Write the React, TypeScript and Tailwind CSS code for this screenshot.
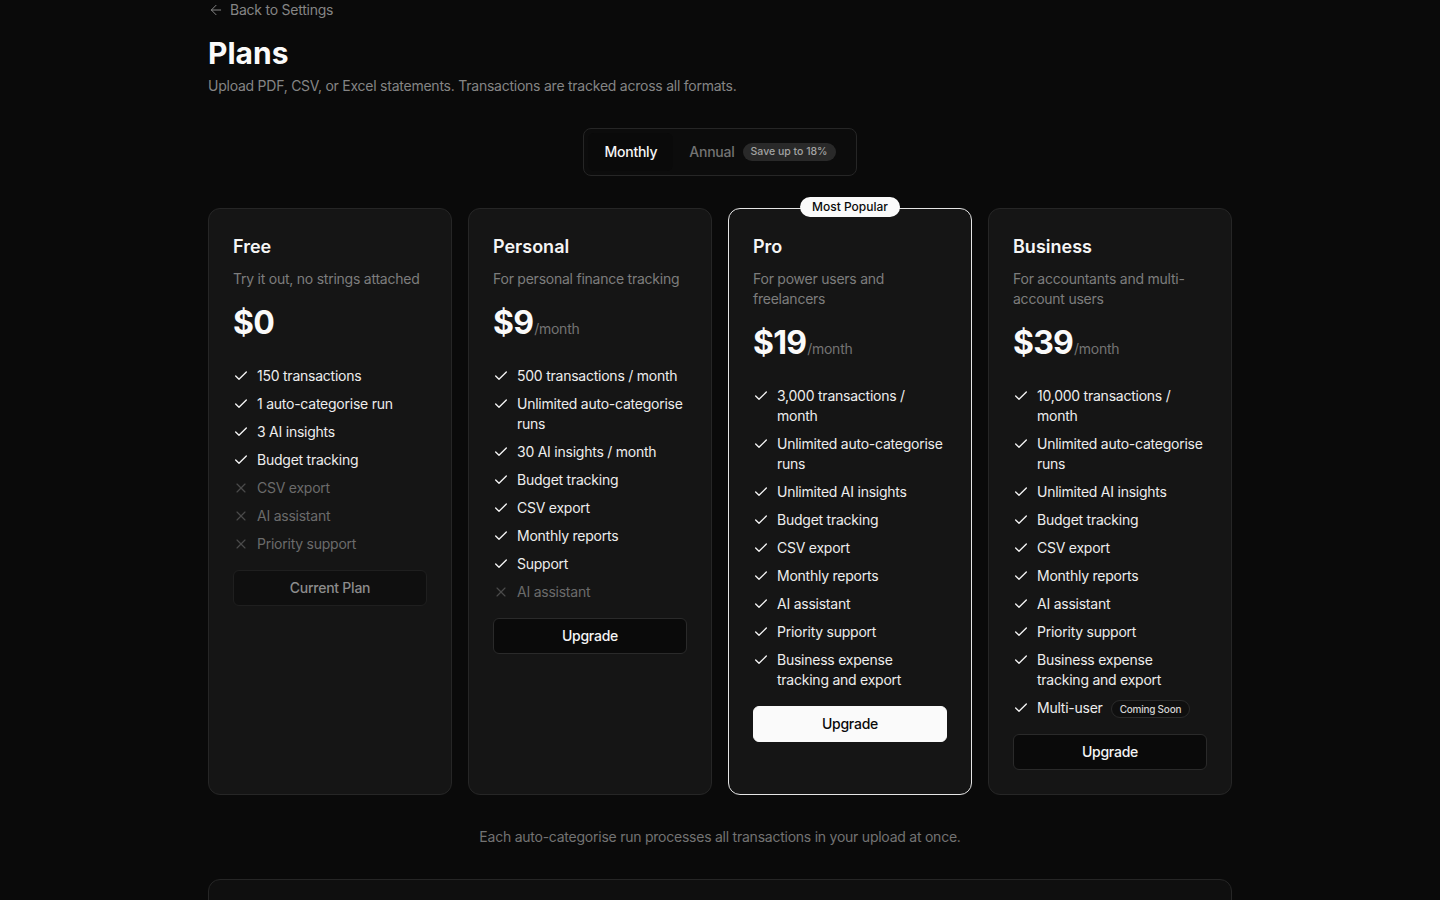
import { ArrowLeft, Check, X } from "lucide-react";

type Feature = {
  label: string;
  included: boolean;
  badge?: string;
};

type Plan = {
  name: string;
  description: string;
  price: string;
  perMonth: boolean;
  features: Feature[];
  cta: string;
  variant: "current" | "default" | "primary";
  popular?: boolean;
};

const PLANS: Plan[] = [
  {
    name: "Free",
    description: "Try it out, no strings attached",
    price: "$0",
    perMonth: false,
    cta: "Current Plan",
    variant: "current",
    features: [
      { label: "150 transactions", included: true },
      { label: "1 auto-categorise run", included: true },
      { label: "3 AI insights", included: true },
      { label: "Budget tracking", included: true },
      { label: "CSV export", included: false },
      { label: "AI assistant", included: false },
      { label: "Priority support", included: false },
    ],
  },
  {
    name: "Personal",
    description: "For personal finance tracking",
    price: "$9",
    perMonth: true,
    cta: "Upgrade",
    variant: "default",
    features: [
      { label: "500 transactions / month", included: true },
      { label: "Unlimited auto-categorise runs", included: true },
      { label: "30 AI insights / month", included: true },
      { label: "Budget tracking", included: true },
      { label: "CSV export", included: true },
      { label: "Monthly reports", included: true },
      { label: "Support", included: true },
      { label: "AI assistant", included: false },
    ],
  },
  {
    name: "Pro",
    description: "For power users and freelancers",
    price: "$19",
    perMonth: true,
    cta: "Upgrade",
    variant: "primary",
    popular: true,
    features: [
      { label: "3,000 transactions / month", included: true },
      { label: "Unlimited auto-categorise runs", included: true },
      { label: "Unlimited AI insights", included: true },
      { label: "Budget tracking", included: true },
      { label: "CSV export", included: true },
      { label: "Monthly reports", included: true },
      { label: "AI assistant", included: true },
      { label: "Priority support", included: true },
      { label: "Business expense tracking and export", included: true },
    ],
  },
  {
    name: "Business",
    description: "For accountants and multi-account users",
    price: "$39",
    perMonth: true,
    cta: "Upgrade",
    variant: "default",
    features: [
      { label: "10,000 transactions / month", included: true },
      { label: "Unlimited auto-categorise runs", included: true },
      { label: "Unlimited AI insights", included: true },
      { label: "Budget tracking", included: true },
      { label: "CSV export", included: true },
      { label: "Monthly reports", included: true },
      { label: "AI assistant", included: true },
      { label: "Priority support", included: true },
      { label: "Business expense tracking and export", included: true },
      { label: "Multi-user", included: true, badge: "Coming Soon" },
    ],
  },
];

function PlanCard({ plan }: { plan: Plan }) {
  const buttonClass =
    plan.variant === "primary"
      ? "bg-[#fafafa] text-[#0a0a0a] border-[#fafafa]"
      : plan.variant === "current"
        ? "bg-[#0f0f0f] text-[#8c8c8c] border-[#1f1f1f]"
        : "bg-[#0a0a0a] text-[#f5f5f5] border-[#2a2a2a]";

  return (
    <div
      className={`relative flex flex-col rounded-xl border bg-[#151515] p-6 ${
        plan.popular ? "border-[#e5e5e5]" : "border-[#262626]"
      }`}
    >
      {plan.popular ? (
        <span className="absolute -top-[12px] left-1/2 -translate-x-1/2 rounded-full bg-[#fafafa] px-3 py-[2px] text-xs font-medium leading-4 tracking-normal text-[#0a0a0a]">
          Most Popular
        </span>
      ) : null}

      <h3 className="text-lg font-semibold leading-7 tracking-normal text-[#f5f5f5]">
        {plan.name}
      </h3>
      <p className="mt-2 text-sm leading-5 text-[#7d7d7d]">{plan.description}</p>

      <div className="mt-[14px] flex items-baseline">
        <span className="text-[32px] font-bold leading-10 tracking-tight text-[#fafafa]">
          {plan.price}
        </span>
        {plan.perMonth ? (
          <span className="ml-px text-sm text-[#737373]">/month</span>
        ) : null}
      </div>

      <ul className="mt-[23px] flex flex-col gap-2">
        {plan.features.map((feature) => (
          <li key={feature.label} className="flex items-start gap-2 text-sm leading-5">
            {feature.included ? (
              <Check className="mt-0.5 h-4 w-4 shrink-0 text-[#f5f5f5]" strokeWidth={2} />
            ) : (
              <X className="mt-0.5 h-4 w-4 shrink-0 text-[#4a4a4a]" strokeWidth={1.75} />
            )}
            <span className={feature.included ? "text-[#ededed]" : "text-[#6b6b6b]"}>
              {feature.label}
              {feature.badge ? (
                <span className="ml-2 inline-flex items-center rounded-full border border-[#2a2a2a] bg-[#0f0f0f] px-2 py-[1px] align-middle text-[10px] font-medium leading-[14px] text-[#d4d4d4]">
                  {feature.badge}
                </span>
              ) : null}
            </span>
          </li>
        ))}
      </ul>

      <button
        type="button"
        className={`mt-4 h-9 w-full rounded-md border text-sm font-medium ${buttonClass}`}
      >
        {plan.cta}
      </button>
    </div>
  );
}

export default function App() {
  return (
    <div
      className="min-h-screen bg-[#0a0a0a] tracking-[-0.015em] text-[#f5f5f5]"
      style={{ fontFamily: "Inter, 'Noto Sans', sans-serif" }}
    >
      <div className="mx-auto max-w-5xl pb-16">
        <a href="#" className="flex h-5 items-center gap-1.5 text-sm text-[#858585]">
          <ArrowLeft className="h-4 w-4" strokeWidth={1.5} />
          Back to Settings
        </a>

        <h1 className="mt-[15px] text-3xl font-bold leading-9 tracking-normal text-[#fafafa]">
          Plans
        </h1>
        <p className="mt-[5px] text-sm leading-5 text-[#858585]">
          Upload PDF, CSV, or Excel statements. Transactions are tracked across all formats.
        </p>

        <div className="mt-8 flex justify-center">
          <div className="flex items-center rounded-lg border border-[#262626] bg-[#0c0c0c] p-1">
            <button
              type="button"
              className="h-[38px] rounded-md bg-[#0a0a0a] px-4 text-sm font-medium text-[#f5f5f5]"
            >
              Monthly
            </button>
            <button
              type="button"
              className="flex h-[38px] items-center px-4 text-sm font-medium text-[#737373]"
            >
              Annual
              <span className="ml-2 rounded-full bg-[#292929] px-2 py-[2px] text-[10.5px] leading-[14px] tracking-normal text-[#a3a3a3]">
                Save up to 18%
              </span>
            </button>
          </div>
        </div>

        <div className="mt-8 grid grid-cols-4 gap-4">
          {PLANS.map((plan) => (
            <PlanCard key={plan.name} plan={plan} />
          ))}
        </div>

        <p className="mt-8 text-center text-sm leading-5 text-[#737373]">
          Each auto-categorise run processes all transactions in your upload at once.
        </p>

        <div className="mt-8 h-40 rounded-xl border border-[#262626] bg-[#0f0f0f]" />
      </div>
    </div>
  );
}
